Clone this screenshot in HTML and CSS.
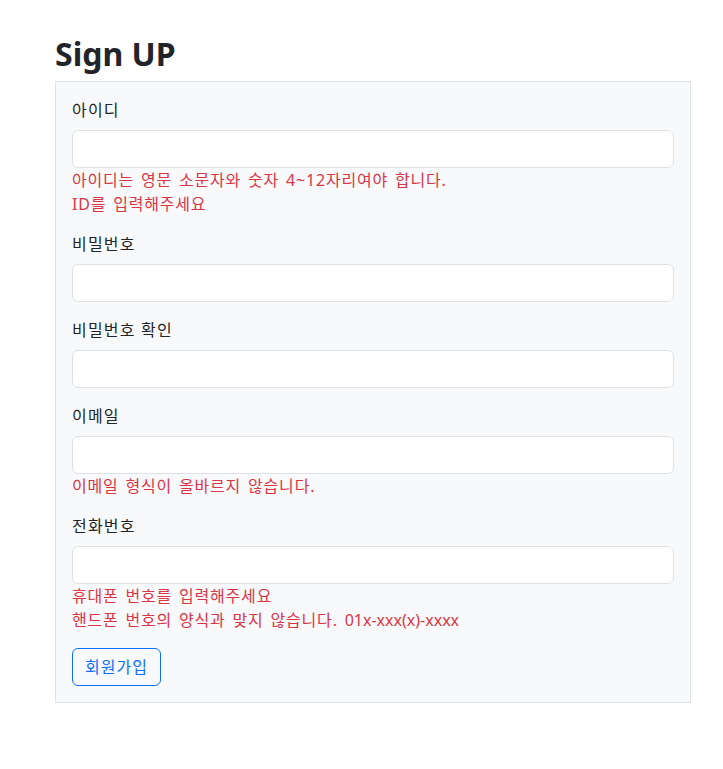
FILE: index.html
```html
<!DOCTYPE html>
<html lang="ko">
<head>
<meta charset="utf-8">
<title>Sign UP</title>
<link rel="stylesheet" href="styles.css">
</head>
<body>
<div class="page">
  <h2 class="title">Sign UP</h2>
  <form class="card">
    <div class="group">
      <label class="label">아이디</label>
      <input class="input" type="text">
      <div class="error">아이디는 영문 소문자와 숫자 4~12자리여야 합니다.</div>
      <div class="error">ID를 입력해주세요</div>
    </div>
    <div class="group">
      <label class="label">비밀번호</label>
      <input class="input" type="password">
    </div>
    <div class="group">
      <label class="label">비밀번호 확인</label>
      <input class="input" type="password">
    </div>
    <div class="group">
      <label class="label">이메일</label>
      <input class="input" type="text">
      <div class="error">이메일 형식이 올바르지 않습니다.</div>
    </div>
    <div class="group">
      <label class="label">전화번호</label>
      <input class="input" type="text">
      <div class="error">휴대폰 번호를 입력해주세요</div>
      <div class="error">핸드폰 번호의 양식과 맞지 않습니다. <span class="latin">01x-xxx(x)-xxxx</span></div>
    </div>
    <button class="btn" type="button">회원가입</button>
  </form>
</div>
</body>
</html>
```

FILE: styles.css
```css
* { box-sizing: border-box; }
html, body { margin: 0; padding: 0; background: #fff; }
body {
  font-family: "Noto Sans", "Noto Sans CJK KR", sans-serif;
  font-size: 16px;
  line-height: 1.5;
  color: #212529;
}
.page {
  width: 636px;
  margin-left: 55px;
  padding-top: 35px;
}
.title {
  margin: 0 0 8px 0;
  font-size: 32px;
  line-height: 38px;
  font-weight: 700;
  color: #212529;
}
.card {
  display: flex;
  flex-direction: column;
  align-items: flex-start;
  margin: 0;
  padding: 16px;
  background: #f8f9fa;
  border: 1px solid #dee2e6;
}
.group {
  width: 100%;
  display: flex;
  flex-direction: column;
  margin-bottom: 16px;
}
.label {
  display: block;
  height: 24px;
  margin-bottom: 8px;
  font-size: 16px;
  line-height: 24px;
  letter-spacing: 1.2px;
}
.input {
  display: block;
  width: 100%;
  height: 38px;
  padding: 6px 12px;
  font: inherit;
  background: #fff;
  border: 1px solid #dee2e6;
  border-radius: 6px;
  outline: none;
}
.error {
  height: 24px;
  font-size: 16px;
  line-height: 24px;
  letter-spacing: 0.8px;
  word-spacing: 2px;
  color: #dc3545;
}
.latin {
  letter-spacing: 0;
}
.btn {
  height: 38px;
  padding: 0 12px;
  font-family: "Noto Sans", "Noto Sans CJK KR", sans-serif;
  font-size: 16px;
  line-height: 36px;
  letter-spacing: 1px;
  color: #0d6efd;
  background: transparent;
  border: 1px solid #0d6efd;
  border-radius: 6px;
}
```
